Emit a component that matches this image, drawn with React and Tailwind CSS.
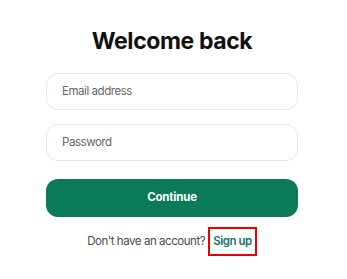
export default function App() {
  return (
    <div className="w-[347px] h-[279px] bg-white" style={{ fontFamily: "Inter, 'Noto Sans', sans-serif" }}>
      <div className="flex flex-col items-center pt-[26px] pr-[3px]">
        <h1 className="text-[23px] leading-[31px] font-bold text-[#111] tracking-[-0.4px]">Welcome back</h1>
        <div className="mt-[16px] w-[252px] h-[37px] rounded-[12px] border border-[#e8e8e8] flex items-center px-[15px] text-[11.5px] tracking-[-0.45px] text-[#666]">
          Email address
        </div>
        <div className="mt-[14px] w-[252px] h-[37px] rounded-[12px] border border-[#e8e8e8] flex items-center px-[15px] text-[11.5px] tracking-[-0.45px] text-[#666]">
          Password
        </div>
        <button className="mt-[18px] w-[252px] h-[38px] rounded-[12px] bg-[#0a7a58] text-white text-[11.5px] tracking-[-0.2px] font-bold">
          Continue
        </button>
        <div className="mt-[10px] flex items-center text-[11.5px] tracking-[-0.45px] text-[#4a4a4a]">
          <span>Don't have an account?</span>
          <span className="ml-[3px] h-[29px] border-2 border-[#ee0000] px-[3px] flex items-center font-semibold text-[#13776a]">Sign up</span>
        </div>
      </div>
    </div>
  );
}
